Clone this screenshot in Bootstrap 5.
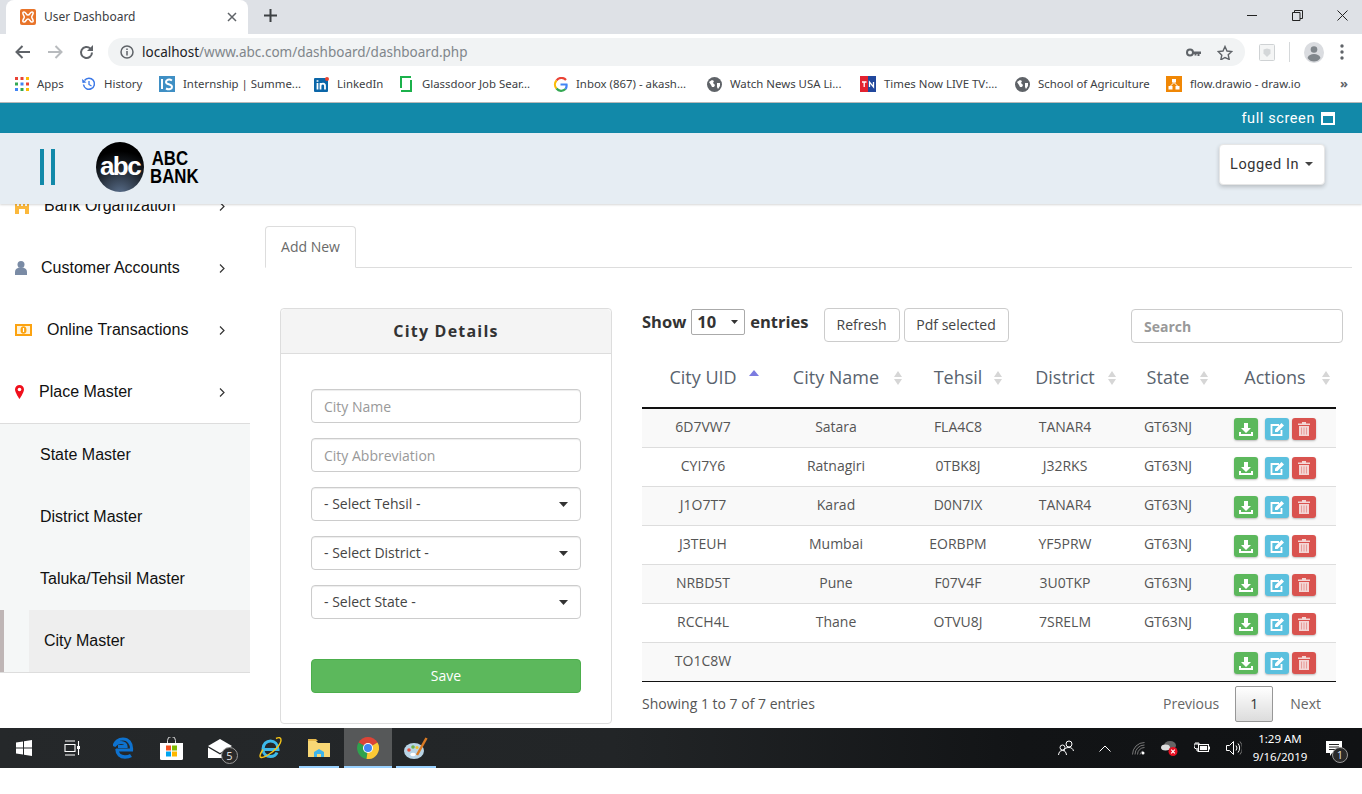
<!DOCTYPE html>
<html lang="en">
<head>
<meta charset="utf-8">
<title>User Dashboard</title>
<link href="https://cdn.jsdelivr.net/npm/bootstrap@5.3.0/dist/css/bootstrap.min.css" rel="stylesheet">
<style>
html,body{height:794px;overflow:hidden;background:#fff}
body{font-family:"Open Sans","Liberation Sans",sans-serif;color:#555;font-size:14px}
svg{display:block;flex:none}
/* browser chrome */
.x-strip{height:34px;background:#dee1e6;padding-left:6px}
.x-tab{width:242px;height:34px;background:#fff;border-radius:8px 8px 0 0;padding:0 11px 0 14px;font:12px "Noto Sans","Liberation Sans",sans-serif;color:#3c4043}
.x-tab span{padding-bottom:2px}
.x-plus{margin:9px 0 0 16px}
.x-winbtns{margin-left:auto;gap:34px;padding-right:14px;height:30px}
.x-toolbar{height:32px;background:#fff;padding:4px 8px 0 15px}
.x-nav{height:28px}
.x-omni{width:1137px;height:28px;margin-left:14px;background:#f1f3f4;border-radius:14px;padding:0 12px;font:13.5px "Noto Sans","Liberation Sans",sans-serif;color:#80868b}
.x-omni b{font-weight:400;color:#202124}
.x-tools{margin-left:14px}
.x-sep{width:1px;height:20px;background:#d5d8da;margin:0 14px}
.x-bm{height:37px;background:#fff;border-bottom:1px solid #b8b8b8;padding-left:15px;display:grid;grid-template-columns:67px 77px 155px 86px 153px 154px 153px 155px 151px 1fr;align-items:center;font:11.4px "Noto Sans","Liberation Sans",sans-serif;color:#3c4043}
.x-bmi{display:flex;align-items:center;gap:8px;white-space:nowrap}
.x-bmi span{padding-bottom:2px}
.x-gd{margin-right:2px}
.x-more{margin-left:auto;padding-right:14px;color:#5f6368;font-weight:700;font-size:13px}
/* app bars */
.x-teal{height:30px;background:#1289a9;color:#fff;font:14.5px Roboto,"Liberation Sans",sans-serif;letter-spacing:.6px;padding-right:27px;gap:6px}
.x-hdr{height:71px;background:#e6edf3;position:relative;z-index:2;box-shadow:0 1px 2px rgba(0,0,0,.16);padding:0 37px 0 40px}
.x-bars{width:15px;height:36px;border-left:4px solid #1289a9;border-right:4px solid #1289a9;margin-bottom:3px}
.x-abc{width:48px;height:50px;border-radius:50%;margin:0 0 3px 41px;background:radial-gradient(circle at 50% 105%,#5a6f8c 0,#1a2027 50%,#000 75%);color:#fff;font:700 26px/48px "Liberation Sans",sans-serif;letter-spacing:-1.6px;text-align:center}
.x-name{font:700 20px/18px "Liberation Sans",sans-serif;color:#000;margin:0 0 3px 6px;text-align:left;transform:scaleX(.84);transform-origin:left center}
.x-name span{display:block}
.x-name .x-l1{padding-left:2px}
.x-menu{margin-bottom:9px}
.x-login{height:41px;width:106px;background:#fff;border:1px solid #e6e6e6;border-radius:4px;box-shadow:0 2px 4px rgba(0,0,0,.2);font:14.5px Roboto,"Liberation Sans",sans-serif;letter-spacing:.6px;color:#333;padding:0 10px;gap:6px}
.x-caret{width:0;height:0;border-left:4px solid transparent;border-right:4px solid transparent;border-top:4px solid #444}
.x-body{height:524px;overflow:hidden}
/* sidebar */
.x-side{width:250px;flex:none;overflow:hidden;font:16px "Liberation Sans",sans-serif;color:#111}
.x-top{margin-top:-29px;border-bottom:1px solid #ddd;height:249px}
.x-item{height:62px;padding:0 25px 0 15px}
.x-chev{margin-left:auto}
.x-lbl-a{margin-left:15px}.x-lbl-b{margin-left:14px}.x-lbl-c{margin-left:15px}.x-lbl-d{margin-left:15px}
.x-sub{background:#f5f7f7;border-bottom:1px solid #ddd}
.x-subi{height:62px;padding-left:40px}
.x-cur{height:62px;border-left:4px solid #bfb6b6;padding-left:25px}
.x-cur span{background:#eee;height:62px;width:221px;padding-left:15px}
/* main */
.x-main{flex:1;padding:22px 10px 0 15px;min-width:0}
.x-tabs{border-bottom:1px solid #ddd;height:42px}
.x-tabs .nav-link,.x-tabs .nav-link.active{height:42px;width:91px;padding:0 0 2px;display:flex;align-items:center;justify-content:center;color:#6a6a6a;font-size:14px;border:1px solid #ddd;border-bottom-color:#fff;border-radius:4px 4px 0 0;background:#fff}
.x-content{margin:40px 0 0 15px;gap:30px}
.x-card{width:332px;height:416px;flex:none;border:1px solid #ddd;border-radius:4px}
.x-card .card-header{height:45px;background:#f4f4f4;border-bottom:1px solid #ddd;font-size:16px;font-weight:700;letter-spacing:1.2px;color:#333;padding:0}
.x-card .card-body{padding:35px 30px 0;gap:15px}
.x-card .form-control,.x-card .form-select{height:34px;border:1px solid #ccc;border-radius:4px;font-size:14px;padding:0 12px;color:#444;box-shadow:inset 0 1px 1px rgba(0,0,0,.075)}
.x-card .form-select{padding-bottom:2px}
.x-card .form-control::placeholder{color:#999}
.form-select{background-image:url("data:image/svg+xml,%3Csvg xmlns='http://www.w3.org/2000/svg' width='10' height='5'%3E%3Cpath d='M0 0h10L5 5z' fill='%23333'/%3E%3C/svg%3E");background-size:9px 5px;background-position:right 12px center}
.x-save{height:34px;margin-top:25px;background:#5cb85c;border:1px solid #4cae4c;color:#fff;font-size:14px;padding:0 0 2px;border-radius:4px}
.x-right{width:701px;flex:none}
.x-ctrl{height:34px;align-items:flex-start}
.x-show{font-size:16.5px;font-weight:700;color:#333;height:28px;gap:5px;margin:0}
.x-len{width:54px;height:26px;padding:0 0 0 5px;border:1px solid #aaa;border-radius:2px;font-size:16.5px;font-weight:700;color:#333;background-size:7px 4px;background-position:right 6px center}
.x-btn{height:34px;border:1px solid #ccc;border-radius:4px;background:#fff;font-size:14px;color:#444;padding:0 0 2px;white-space:nowrap}
.x-r1{margin-left:15px;width:76px}.x-r2{margin-left:4px;width:105px}
.x-search{margin-left:auto;margin-top:1px;width:212px;height:34px;border:1px solid #ccc;border-radius:4px;padding:0 12px;font-size:14px;font-weight:700}
.x-search::placeholder{color:#999}
.x-table{width:694px;table-layout:fixed;margin:5px 0 0;border-collapse:separate;border-spacing:0;--bs-table-striped-bg:#f9f9f9;--bs-table-striped-color:#555;--bs-table-color:#555}
.x-c1{width:122px}.x-c2{width:144px}.x-c3{width:100px}.x-c4{width:114px}.x-c5{width:92px}.x-c6{width:122px}
.x-table th{position:relative;height:62px;padding:0;font-size:18px;font-weight:400;color:#59636e;text-align:center;vertical-align:middle;border-bottom:2px solid #111}
.x-table td{height:39px;padding:0 0 3px;font-size:14px;color:#555;text-align:center;vertical-align:middle;border-bottom:1px solid #ddd}
.x-table tbody tr:last-child td{border-bottom:1px solid #111}
.x-sort{position:absolute;right:5px;top:23px}
.x-acts{padding:5px 0 0 20px}
.x-act{width:24px;height:22px;border-radius:3px;box-shadow:0 1px 2px rgba(0,0,0,.25)}
.x-g{background:#5cb85c}.x-i{background:#5bc0de;margin:0 3px 0 7px}.x-d{background:#d9534f}
.x-foot{width:694px;height:44px}
.x-foot>span:not(.x-page){padding-bottom:2px}
.x-prev,.x-next{color:#666;font-size:14px}
.x-page{width:38px;height:36px;margin:0 17px 0 16px;border:1px solid #979797;border-radius:2px;background:linear-gradient(#fff,#dcdcdc);color:#333;font-size:14px;padding-bottom:2px}
.x-next{margin-right:15px}
/* taskbar */
.x-task{height:40px;background:linear-gradient(90deg,#25282a,#222527 45%,#121416 75%,#101214);color:#fff;font:11.5px "Noto Sans","Liberation Sans",sans-serif;display:grid;grid-template-columns:48px 48px 54px 42px 56px 44px 51px 49px 48px 1fr}
.x-cell{display:flex;align-items:center;justify-content:center;position:relative;height:40px}
.x-run::after{content:"";position:absolute;left:4px;right:4px;bottom:0;height:2px;background:#99d1ff}
.x-expl{margin-left:3px}
.x-on{background:#565859;margin-left:1px}
.x-on::after{left:0;right:0}
.x-cnt{position:absolute;width:17px;height:17px;border-radius:50%;background:#2a2a2a;border:1px solid #999;font-size:11px;line-height:15px;text-align:center;color:#ddd;right:10px;bottom:4px}
.x-tray{grid-column:10;justify-content:flex-end;display:flex;align-items:center;padding-right:20px}
.x-clock{text-align:center;line-height:18px;width:72px;margin:0 10px 0 2px;white-space:nowrap}
.x-rest{height:26px;background:#fff}
.x-t1{margin-right:25px}.x-t2{margin-right:21px}.x-t3{margin-right:16px}.x-t4{margin-right:16px}.x-t5{margin-right:16px}
.x-ntf{position:relative}
.x-ntf .x-cnt{right:-6px;bottom:-7px;width:16px;height:16px;line-height:14px}
</style>
</head>
<body>
<div class="x-strip d-flex align-items-start">
  <div class="x-tab d-flex align-items-center gap-2">
    <svg width="16" height="16" viewBox="0 0 16 16"><rect width="16" height="16" rx="2" fill="#e8742a"/><path d="M4 3c2 0 2 3 4 3s2-3 4-3 1 2.500 0 4c-.5.800-.5 1.200 0 2 1 1.500 2 4 0 4s-2-3-4-3-2 3-4 3-1-2.500 0-4c.5-.8.500-1.200 0-2-1-1.500-2-4 0-4z" fill="none" stroke="#fff" stroke-width="1.500"/></svg>
    <span>User Dashboard</span>
    <svg class="ms-auto" width="10" height="10" viewBox="0 0 10 10"><path d="M1 1l8 8M9 1l-8 8" stroke="#5f6368" stroke-width="1.500"/></svg>
  </div>
  <svg class="x-plus" width="13" height="13" viewBox="0 0 13 13"><path d="M6.500 0v13M0 6.500h13" stroke="#3c4043" stroke-width="2"/></svg>
  <div class="x-winbtns d-flex align-items-center">
    <svg width="11" height="11" viewBox="0 0 11 11"><path d="M0 5.500h10" stroke="#222" stroke-width="1"/></svg>
    <svg width="11" height="11" viewBox="0 0 11 11"><path d="M.5 2.500h7.500v8H.5zM2.500 2.500V.5h8v8H8" fill="none" stroke="#222"/></svg>
    <svg width="11" height="11" viewBox="0 0 11 11"><path d="M.5.500l10 10M10.500.500l-10 10" stroke="#222"/></svg>
  </div>
</div>
<div class="x-toolbar d-flex">
  <div class="x-nav d-flex align-items-center gap-3">
    <svg width="16" height="14" viewBox="0 0 16 14"><path d="M15 7H2M7.500 1L1.500 7l6 6" fill="none" stroke="#5f6368" stroke-width="2"/></svg>
    <svg width="16" height="14" viewBox="0 0 16 14"><path d="M1 7h13M8.500 1l6 6-6 6" fill="none" stroke="#b8bbbe" stroke-width="2"/></svg>
    <svg width="15" height="15" viewBox="0 0 15 15"><path d="M13 7.500a5.500 5.500 0 1 1-1.600-3.900" fill="none" stroke="#5f6368" stroke-width="2"/><path d="M14 0v6H8z" fill="#5f6368"/></svg>
  </div>
  <div class="x-omni d-flex align-items-center">
    <svg width="14" height="14" viewBox="0 0 14 14" class="me-2"><circle cx="7" cy="7" r="6" fill="none" stroke="#5f6368" stroke-width="1.500"/><path d="M7 6v4.500M7 3.500v1.500" stroke="#5f6368" stroke-width="1.500"/></svg>
    <span><b>localhost</b>/www.abc.com/dashboard/dashboard.php</span>
    <svg class="ms-auto" width="15" height="9" viewBox="0 0 15 9"><circle cx="4" cy="4.500" r="3" fill="none" stroke="#5f6368" stroke-width="2"/><path d="M7 3.500h8v2.500h-1.500v2h-2V6h-1v1.500H8.500V6H7z" fill="#5f6368"/></svg>
    <svg class="ms-3" width="16" height="15" viewBox="0 0 16 15"><path d="M8 1.500l2 4.500 4.800.5-3.600 3.200 1 4.700L8 12.500l-4.200 2.400 1-4.700L1.200 6.500 6 6z" fill="none" stroke="#5f6368" stroke-width="1.400"/></svg>
  </div>
  <div class="x-nav x-tools d-flex align-items-center">
    <svg width="16" height="17" viewBox="0 0 16 17"><rect x=".5" y=".5" width="15" height="16" rx="1" fill="#f4f5f5" stroke="#cfd2d4"/><path d="M4.500 5.500l3.500-1 3.500 1v4L8 13 4.500 9.500z" fill="#d4d7d9"/></svg>
    <span class="x-sep"></span>
    <svg width="20" height="21" viewBox="0 0 20 21"><ellipse cx="10" cy="10.500" rx="10" ry="10.500" fill="#dadce0"/><circle cx="10" cy="7.500" r="3.300" fill="#80868b"/><path d="M3.500 16c1-3 3.500-4 6.500-4s5.500 1 6.500 4c-1.500 2.500-4 3.500-6.500 3.500S5 18.500 3.500 16z" fill="#80868b"/></svg>
    <svg class="ms-3" width="4" height="16" viewBox="0 0 4 16"><circle cx="2" cy="2" r="1.700" fill="#5f6368"/><circle cx="2" cy="8" r="1.700" fill="#5f6368"/><circle cx="2" cy="14" r="1.700" fill="#5f6368"/></svg>
  </div>
</div>
<div class="x-bm">
  <div class="x-bmi"><svg width="14" height="14" viewBox="0 0 14 14"><path d="M0 0h3v3H0z" fill="#ea4335"/><path d="M5.500 0h3v3h-3z" fill="#ea4335"/><path d="M11 0h3v3h-3z" fill="#fbbc05"/><path d="M0 5.500h3v3H0z" fill="#34a853"/><path d="M5.500 5.500h3v3h-3z" fill="#4285f4"/><path d="M11 5.500h3v3h-3z" fill="#ea4335"/><path d="M0 11h3v3H0z" fill="#4285f4"/><path d="M5.500 11h3v3h-3z" fill="#34a853"/><path d="M11 11h3v3h-3z" fill="#fbbc05"/></svg><span>Apps</span></div>
  <div class="x-bmi"><svg width="14" height="14" viewBox="0 0 14 14"><path d="M2.500 3.500a5.500 5.500 0 1 1-1 4" fill="none" stroke="#3b78e7" stroke-width="1.500"/><path d="M0 2l.5 4 4-.5z" fill="#3b78e7"/><path d="M7 4v3.500l2.500 1.500" fill="none" stroke="#3b78e7" stroke-width="1.300"/></svg><span>History</span></div>
  <div class="x-bmi"><svg width="16" height="16" viewBox="0 0 16 16"><rect width="16" height="16" fill="#3f8fc4"/><path d="M3 3v10" stroke="#fff" stroke-width="2"/><path d="M13 4.500c-3-2-6-.5-6 1.500 0 3 6 1.500 6 5 0 2-3 3-6 1.500" fill="none" stroke="#fff" stroke-width="2"/></svg><span>Internship | Summe...</span></div>
  <div class="x-bmi"><svg width="15" height="15" viewBox="0 0 15 15"><rect y="1" width="14" height="14" rx="1" fill="#0b66a8"/><path d="M3.500 6v6.500M3.500 3.200v1.500M6.500 12.500V6M6.500 8.500c1-2.500 4.500-2.500 4.500 .5v3.500" fill="none" stroke="#fff" stroke-width="1.800"/><circle cx="13" cy="2" r="2" fill="#e8432f"/></svg><span>LinkedIn</span></div>
  <div class="x-bmi"><svg class="x-gd" width="12" height="16" viewBox="0 0 12 16"><path d="M11 1H1v11M1 15h10V4" fill="none" stroke="#1bb14b" stroke-width="2"/></svg><span>Glassdoor Job Sear...</span></div>
  <div class="x-bmi"><svg width="15" height="15" viewBox="0 0 15 15"><path d="M13 3a6 6 0 0 0-9.500.500" fill="none" stroke="#ea4335" stroke-width="2.200"/><path d="M3.500 3.500a6 6 0 0 0 0 8" fill="none" stroke="#fbbc05" stroke-width="2.200"/><path d="M3.500 11.500a6 6 0 0 0 9 .500" fill="none" stroke="#34a853" stroke-width="2.200"/><path d="M12.500 12a6 6 0 0 0 1-4.500H7.500" fill="none" stroke="#4285f4" stroke-width="2.200"/></svg><span>Inbox (867) - akash...</span></div>
  <div class="x-bmi"><svg width="15" height="15" viewBox="0 0 15 15"><circle cx="7.500" cy="7.500" r="7.500" fill="#5f6368"/><path d="M2 5l3-2 2 1-1 2 2 2-1 2-2 0-1-2zM10 6l3 0 0 3-2 3-1-2z" fill="#fff"/></svg><span>Watch News USA Li...</span></div>
  <div class="x-bmi"><svg width="16" height="16" viewBox="0 0 16 16"><rect width="8" height="16" fill="#e2222f"/><rect x="8" width="8" height="16" fill="#21479c"/><path d="M2 6h4.500M4.200 6v5M9.500 11V6l4 5V6" fill="none" stroke="#fff" stroke-width="1.300"/></svg><span>Times Now LIVE TV:...</span></div>
  <div class="x-bmi"><svg width="15" height="15" viewBox="0 0 15 15"><circle cx="7.500" cy="7.500" r="7.500" fill="#5f6368"/><path d="M2 5l3-2 2 1-1 2 2 2-1 2-2 0-1-2zM10 6l3 0 0 3-2 3-1-2z" fill="#fff"/></svg><span>School of Agriculture</span></div>
  <div class="x-bmi"><svg width="16" height="16" viewBox="0 0 16 16"><rect width="16" height="16" fill="#f08705"/><path d="M6 3h4v3.500H6zM2.500 10h4v3.500h-4zM9.500 10h4v3.500h-4z" fill="#fff"/><path d="M8 6.500L4.500 10M8 6.500l3.500 3.500" stroke="#fff"/></svg><span>flow.drawio - draw.io</span><span class="x-more">»</span></div>
</div>

<div class="x-teal d-flex align-items-center justify-content-end">
  <span>full screen</span>
  <svg width="14" height="13" viewBox="0 0 14 13"><path d="M0 0h14v13H0z" fill="#fff"/><path d="M2 4h10v7H2z" fill="#1289a9"/></svg>
</div>
<header class="x-hdr d-flex align-items-center">
  <div class="x-bars"></div>
  <div class="x-abc">abc</div>
  <div class="x-name"><span class="x-l1">ABC</span><span>BANK</span></div>
  <div class="dropdown x-menu ms-auto">
    <button class="x-login d-flex align-items-center" type="button"><span>Logged In</span><span class="x-caret"></span></button>
  </div>
</header>
<div class="x-body d-flex">
  <aside class="x-side">
    <div class="x-top">
      <div class="x-item d-flex align-items-center">
        <svg width="14" height="16" viewBox="0 0 14 16"><path d="M0 0h14v16H0z" fill="#fbb83c"/><path d="M4 11h6v5H4zM2 2h2v2H2zM6 2h2v2H6zM10 2h2v2h-2zM2 6h2v2H2zM6 6h2v2H6zM10 6h2v2h-2z" fill="#fff"/></svg>
        <span class="x-lbl-a">Bank Organization</span>
        <svg class="x-chev" width="6" height="9" viewBox="0 0 6 9"><path d="M1 .5l4 4-4 4" fill="none" stroke="#333" stroke-width="1.200"/></svg>
      </div>
      <div class="x-item d-flex align-items-center">
        <svg width="12" height="14" viewBox="0 0 12 14"><circle cx="6" cy="3.500" r="3.500" fill="#7a8ba5"/><path d="M0 14v-3c0-3 2-4.500 6-4.500s6 1.500 6 4.500v3z" fill="#7a8ba5"/></svg>
        <span class="x-lbl-b">Customer Accounts</span>
        <svg class="x-chev" width="6" height="9" viewBox="0 0 6 9"><path d="M1 .5l4 4-4 4" fill="none" stroke="#333" stroke-width="1.200"/></svg>
      </div>
      <div class="x-item d-flex align-items-center">
        <svg width="17" height="12" viewBox="0 0 17 12"><rect width="17" height="12" fill="#fca311"/><rect x="2" y="2" width="13" height="8" fill="#fff3d9"/><ellipse cx="8.500" cy="6" rx="3" ry="3.800" fill="#fca311"/><path d="M8.500 4v4" stroke="#fff" stroke-width="1.200"/></svg>
        <span class="x-lbl-c">Online Transactions</span>
        <svg class="x-chev" width="6" height="9" viewBox="0 0 6 9"><path d="M1 .5l4 4-4 4" fill="none" stroke="#333" stroke-width="1.200"/></svg>
      </div>
      <div class="x-item d-flex align-items-center">
        <svg width="9" height="14" viewBox="0 0 9 14"><path d="M4.500 0A4.500 4.500 0 0 0 0 4.500C0 7.500 4.500 14 4.500 14S9 7.500 9 4.500A4.500 4.500 0 0 0 4.500 0z" fill="#f0101c"/><circle cx="4.500" cy="4.500" r="1.800" fill="#fff"/></svg>
        <span class="x-lbl-d">Place Master</span>
        <svg class="x-chev" width="6" height="9" viewBox="0 0 6 9"><path d="M1 .5l4 4-4 4" fill="none" stroke="#333" stroke-width="1.200"/></svg>
      </div>
    </div>
    <div class="x-sub">
      <div class="x-subi d-flex align-items-center">State Master</div>
      <div class="x-subi d-flex align-items-center">District Master</div>
      <div class="x-subi d-flex align-items-center">Taluka/Tehsil Master</div>
      <div class="x-cur d-flex"><span class="d-flex align-items-center">City Master</span></div>
    </div>
  </aside>
  <main class="x-main">
    <ul class="nav nav-tabs x-tabs"><li class="nav-item"><a class="nav-link active" href="#">Add New</a></li></ul>
    <div class="x-content d-flex">
      <section class="card x-card">
        <div class="card-header d-flex align-items-center justify-content-center">City Details</div>
        <div class="card-body d-flex flex-column">
          <input class="form-control" placeholder="City Name">
          <input class="form-control" placeholder="City Abbreviation">
          <select class="form-select"><option>- Select Tehsil -</option></select>
          <select class="form-select"><option>- Select District -</option></select>
          <select class="form-select"><option>- Select State -</option></select>
          <button class="btn x-save" type="button">Save</button>
        </div>
      </section>
      <section class="x-right">
        <div class="x-ctrl d-flex">
          <label class="x-show d-flex align-items-center">Show <select class="form-select x-len"><option>10</option></select> entries</label>
          <button class="btn x-btn x-r1" type="button">Refresh</button>
          <button class="btn x-btn x-r2" type="button">Pdf selected</button>
          <input class="form-control x-search" placeholder="Search">
        </div>
        <table class="table table-striped x-table">
          <colgroup><col class="x-c1"><col class="x-c2"><col class="x-c3"><col class="x-c4"><col class="x-c5"><col class="x-c6"></colgroup>
          <thead><tr>
            <th>City UID<svg class="x-sort" width="10" height="16" viewBox="0 0 10 16"><path d="M0 6l5-6 5 6z" fill="#7b7be0"/></svg></th>
            <th>City Name<svg class="x-sort" width="10" height="16" viewBox="0 0 10 16"><path d="M1 7l4-6 4 6zM1 9l4 6 4-6z" fill="#d6d6d6"/></svg></th>
            <th>Tehsil<svg class="x-sort" width="10" height="16" viewBox="0 0 10 16"><path d="M1 7l4-6 4 6zM1 9l4 6 4-6z" fill="#d6d6d6"/></svg></th>
            <th>District<svg class="x-sort" width="10" height="16" viewBox="0 0 10 16"><path d="M1 7l4-6 4 6zM1 9l4 6 4-6z" fill="#d6d6d6"/></svg></th>
            <th>State<svg class="x-sort" width="10" height="16" viewBox="0 0 10 16"><path d="M1 7l4-6 4 6zM1 9l4 6 4-6z" fill="#d6d6d6"/></svg></th>
            <th>Actions<svg class="x-sort" width="10" height="16" viewBox="0 0 10 16"><path d="M1 7l4-6 4 6zM1 9l4 6 4-6z" fill="#d6d6d6"/></svg></th>
          </tr></thead>
          <tbody id="x-rows"></tbody>
        </table>
        <div class="x-foot d-flex align-items-center">
          <span>Showing 1 to 7 of 7 entries</span>
          <span class="x-prev ms-auto">Previous</span>
          <span class="x-page d-flex align-items-center justify-content-center">1</span>
          <span class="x-next">Next</span>
        </div>
      </section>
    </div>
  </main>
</div>

<footer class="x-task">
  <div class="x-cell"><svg width="16" height="16" viewBox="0 0 16 16"><path d="M0 2.500l7-1V7.500H0zM8 1.300L16 0v7.500H8zM0 8.500h7v6l-7-1zM8 8.500h8V16l-8-1.200z" fill="#fff"/></svg></div>
  <div class="x-cell"><svg width="16" height="16" viewBox="0 0 16 16"><path d="M1 1h10M1 15h10M1 4.500h10v7H1zM14.500 1v14" fill="none" stroke="#fff" stroke-width="1.100"/><rect x="13" y="6" width="3" height="3" fill="#fff"/></svg></div>
  <div class="x-cell"><svg width="21" height="22" viewBox="0 0 21 22"><path d="M3 13h15.500C19 6 15 2 10 2 5.500 2 2 5 1 9c2-2.500 5-3.500 7-3.500 3 0 5 2 5 4H5" fill="none" stroke="#0e72cf" stroke-width="3.200"/><path d="M4 12c0 5 3.500 8 8 8 2.500 0 4.500-.5 6-1.500" fill="none" stroke="#0e72cf" stroke-width="3.500"/></svg></div>
  <div class="x-cell"><svg width="23" height="23" viewBox="0 0 23 23"><path d="M7.500 6V3.500a4 4 0 0 1 8 0V6" fill="none" stroke="#ddd"/><path d="M0 6h23v15.500a1.500 1.500 0 0 1-1.500 1.500h-20A1.500 1.500 0 0 1 0 21.500z" fill="#fff"/><path d="M6 8.500h5v5H6z" fill="#f25022"/><path d="M12 8.500h5v5h-5z" fill="#7fba00"/><path d="M6 14.500h5v5H6z" fill="#00a4ef"/><path d="M12 14.500h5v5h-5z" fill="#ffb900"/></svg></div>
  <div class="x-cell"><svg width="24" height="19" viewBox="0 0 24 19"><path d="M0 7l12-7 12 7-12 7z" fill="#fff"/><path d="M0 8.500l12 7 12-7V19H0z" fill="#fff"/></svg><span class="x-cnt">5</span></div>
  <div class="x-cell"><svg width="24" height="24" viewBox="0 0 24 24"><path d="M5 13.500h15C20 8 16.500 5 12.500 5S5 8 5 13c0 5 3.500 7.500 7.500 7.500 3 0 5.500-1.500 6.500-4" fill="none" stroke="#3db9ea" stroke-width="3"/><path d="M18 2.500c3-1.500 5-1 5 1.500 0 4-6 11-13 15-4 2.500-8 3.500-8 1 0-2 2-5 3-6.500" fill="none" stroke="#f5c518" stroke-width="1.400"/></svg></div>
  <div class="x-cell x-run x-expl"><svg width="22" height="18" viewBox="0 0 22 18"><path d="M0 2h8l2 2h12v14H0z" fill="#f8d775"/><path d="M0 0h8l2 2H0z" fill="#e6b84c"/><path d="M6 18v-5l5-3 5 3v5h-3v-3H9v3z" fill="#3fb4ea"/></svg></div>
  <div class="x-cell x-run x-on"><svg width="22" height="22" viewBox="0 0 22 22"><path d="M11 11L1.500 5.500A11 11 0 0 1 20.500 5.500z" fill="#db4437"/><path d="M11 11l-9.500-5.500A11 11 0 0 0 9.500 21.900z" fill="#2fa24e"/><path d="M11 11l9.500-5.500A11 11 0 0 1 9.500 21.900z" fill="#fcc934"/><circle cx="11" cy="11" r="5" fill="#fff"/><circle cx="11" cy="11" r="4" fill="#4285f4"/></svg></div>
  <div class="x-cell x-run"><svg width="24" height="23" viewBox="0 0 24 23"><ellipse cx="10" cy="14" rx="10" ry="8" fill="#b8d4e6"/><circle cx="5" cy="13" r="1.800" fill="#e8503c"/><circle cx="9" cy="10" r="1.800" fill="#6cb24a"/><circle cx="13" cy="10.500" r="1.600" fill="#f2c12e"/><ellipse cx="9" cy="17.500" rx="2.800" ry="1.800" fill="#fff"/><path d="M22.500 1L13 18" stroke="#d97a24" stroke-width="2.500"/></svg></div>
  <div class="x-tray">
    <svg class="x-t1" width="16" height="16" viewBox="0 0 16 16"><circle cx="11" cy="4" r="3" fill="none" stroke="#fff"/><path d="M6 11c.5-2.500 2-3.500 5-3.500 2 0 4 1 4.500 3.500" fill="none" stroke="#fff"/><circle cx="4.500" cy="7.500" r="2.500" fill="none" stroke="#fff"/><path d="M.5 15c.5-3 1.500-4.500 4-4.500s3.500 1.500 4 4.500" fill="none" stroke="#fff"/></svg>
    <svg class="x-t2" width="12" height="7" viewBox="0 0 12 7"><path d="M.5 6.500L6 1l5.500 5.500" fill="none" stroke="#fff"/></svg>
    <svg class="x-t3" width="13" height="13" viewBox="0 0 13 13"><path d="M.5 12.500A12 12 0 0 1 12.500.5M3 12.500a9.500 9.500 0 0 1 9.500-9.500M5.500 12.500a7 7 0 0 1 7-7M8 12.500a4.500 4.500 0 0 1 3-3.500" fill="none" stroke="#777"/><circle cx="11" cy="11" r="1.500" fill="#fff"/></svg>
    <svg class="x-t4" width="17" height="15" viewBox="0 0 17 15"><ellipse cx="9" cy="4.500" rx="6" ry="4.500" fill="#666"/><ellipse cx="4.500" cy="6.500" rx="4.500" ry="3" fill="#ddd"/><circle cx="12" cy="10.500" r="4.500" fill="#e81123"/><path d="M10.200 8.700l3.600 3.600M13.800 8.700l-3.600 3.600" stroke="#fff" stroke-width="1.200"/></svg>
    <svg class="x-t5" width="16" height="12" viewBox="0 0 16 12"><path d="M2 0v2M4 0v2M0 2h6v2a3 3 0 0 1-6 0zM3 7v2h1" fill="none" stroke="#fff"/><rect x="4.500" y="2.500" width="10" height="7" fill="#222" stroke="#fff"/><rect x="6" y="4" width="7" height="4" fill="#fff"/><rect x="15" y="4.500" width="1" height="3" fill="#fff"/></svg>
    <svg width="16" height="14" viewBox="0 0 16 14"><path d="M.5 4.500h3l4-4v13l-4-4h-3z" fill="none" stroke="#fff"/><path d="M10 4.500a4 4 0 0 1 0 5M12 2.500a7 7 0 0 1 0 9" fill="none" stroke="#fff"/><path d="M14 .5a10 10 0 0 1 0 13" fill="none" stroke="#777"/></svg>
    <div class="x-clock"><div>1:29 AM</div><div>9/16/2019</div></div>
    <div class="x-ntf"><svg width="16" height="15" viewBox="0 0 16 15"><path d="M0 0h16v12H6l-2 3v-3H0z" fill="#fff"/><path d="M3 3.500h10M3 6h10M3 8.500h8" stroke="#222"/></svg><span class="x-cnt">1</span></div>
  </div>
</footer>
<div class="x-rest"></div>

<script>
const rows=[["6D7VW7","Satara","FLA4C8","TANAR4"],["CYI7Y6","Ratnagiri","0TBK8J","J32RKS"],["J1O7T7","Karad","D0N7IX","TANAR4"],["J3TEUH","Mumbai","EORBPM","YF5PRW"],["NRBD5T","Pune","F07V4F","3U0TKP"],["RCCH4L","Thane","OTVU8J","7SRELM"],["TO1C8W","","",""]];
const dl='<svg width="14" height="13" viewBox="0 0 14 13"><path d="M5 0h4v5h3L7 10 2 5h3zM0 9h2v2h10V9h2v4H0z" fill="#fff"/></svg>';
const ed='<svg width="14" height="13" viewBox="0 0 14 13"><path d="M9 2H1.500v10h10V7" fill="none" stroke="#fff" stroke-width="1.800"/><path d="M11.500 0L14 2.500 7.500 9H5V6.500z" fill="#fff"/></svg>';
const tr='<svg width="12" height="14" viewBox="0 0 12 14"><path d="M4 0h4v1.500h4V3H0V1.500h4z" fill="#f3d6d5"/><path d="M1 4h10v10H1z" fill="#f3d6d5"/><path d="M3.500 5.500v7M6 5.500v7M8.500 5.500v7" stroke="#e79c99"/></svg>';
document.getElementById("x-rows").innerHTML=rows.map(r=>`<tr><td>${r[0]}</td><td>${r[1]}</td><td>${r[2]}</td><td>${r[3]}</td><td>${r[3]?"GT63NJ":""}</td><td><div class="x-acts d-flex align-items-center"><span class="x-act x-g d-flex align-items-center justify-content-center">${dl}</span><span class="x-act x-i d-flex align-items-center justify-content-center">${ed}</span><span class="x-act x-d d-flex align-items-center justify-content-center">${tr}</span></div></td></tr>`).join("");
</script>
<script src="https://cdn.jsdelivr.net/npm/bootstrap@5.3.0/dist/js/bootstrap.bundle.min.js"></script>
</body>
</html>
